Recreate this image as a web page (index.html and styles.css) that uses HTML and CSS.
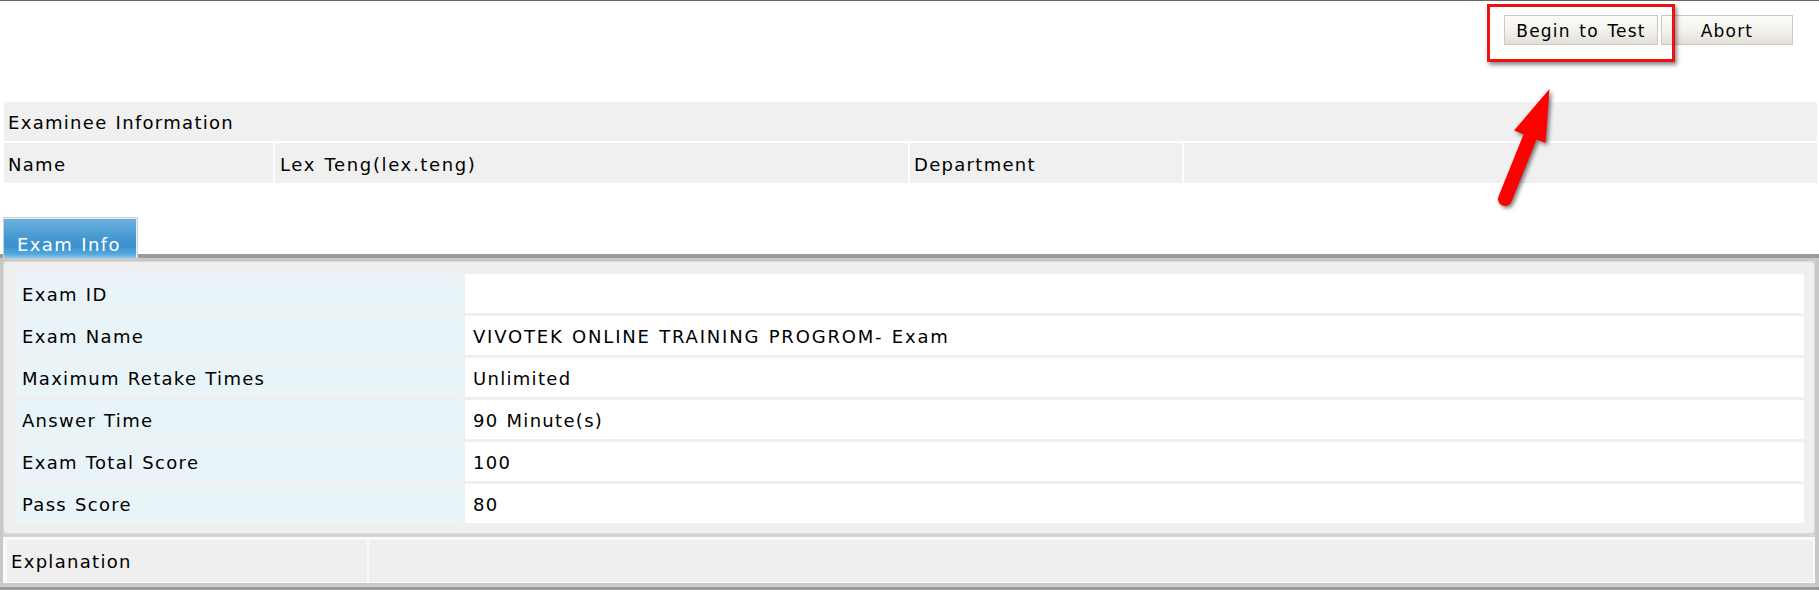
FILE: index.html
```html
<!DOCTYPE html>
<html lang="en">
<head>
<meta charset="utf-8">
<title>Exam Info</title>
<link rel="stylesheet" href="styles.css">
</head>
<body>
<div class="page">
  <div class="topline"></div>
  <div class="toolbar">
    <button class="btn btn-begin">Begin to Test</button>
    <button class="btn btn-abort">Abort</button>
  </div>

  <div class="examinee">
    <div class="ecell title">Examinee Information</div>
    <div class="ecell">Name</div>
    <div class="ecell wide-s">Lex Teng(lex.teng)</div>
    <div class="ecell">Department</div>
    <div class="ecell"></div>
  </div>

  <div class="tabs">
    <div class="tab"><div class="tab-inner">Exam Info</div></div>
  </div>

  <div class="tabbody">
    <div class="panel">
      <div class="info">
        <div class="lbl">Exam ID</div><div class="val"></div>
        <div class="lbl">Exam Name</div><div class="val wide">VIVOTEK ONLINE TRAINING PROGROM- Exam</div>
        <div class="lbl">Maximum Retake Times</div><div class="val">Unlimited</div>
        <div class="lbl">Answer Time</div><div class="val">90 Minute(s)</div>
        <div class="lbl">Exam Total Score</div><div class="val">100</div>
        <div class="lbl">Pass Score</div><div class="val">80</div>
      </div>
    </div>
    <div class="explain">
      <div class="xcell">Explanation</div>
      <div class="xcell"></div>
    </div>
  </div>

  <div class="highlight"></div>
  <svg class="arrow" viewBox="1490 84 70 130" width="70" height="130" aria-hidden="true">
    <line x1="1530" y1="137" x2="1505" y2="199" stroke="#ff0000" stroke-width="14" stroke-linecap="round"/>
    <polygon points="1549.5,89 1514,130.5 1545.5,143" fill="#ff0000"/>
  </svg>
</div>
</body>
</html>
```

FILE: styles.css
```css
html, body {
  margin: 0;
  padding: 0;
  background: #ffffff;
}
body {
  font-family: "DejaVu Sans", Verdana, sans-serif;
  font-size: 18px;
  color: #000;
  overflow: hidden;
}
.page {
  position: relative;
  width: 1819px;
  height: 590px;
  overflow: hidden;
}
.topline {
  height: 1px;
  background: #666666;
}
.toolbar {
  display: flex;
  justify-content: flex-end;
  gap: 3px;
  padding: 14px 26px 57px 0;
}
.btn {
  box-sizing: border-box;
  height: 30px;
  margin: 0;
  padding: 2px 0 0;
  border: 1px solid #cdcac0;
  background: linear-gradient(#fbfbf9 0%, #f3f2ed 50%, #e2dfd6 100%);
  font-family: "DejaVu Sans", Verdana, sans-serif;
  font-size: 17px;
  letter-spacing: 1.2px;
  word-spacing: 2px;
  color: #000;
  text-align: center;
  line-height: 24px;
}
.btn-begin { width: 154px; }
.btn-abort { width: 132px; }

.examinee {
  display: grid;
  grid-template-columns: 269px 633px 272px 1fr;
  grid-template-rows: 39px 40px;
  gap: 2px;
  padding: 0 2px 0 4px;
}
.ecell {
  background: #f0f0f0;
  padding: 2px 0 0 4px;
  display: flex;
  align-items: center;
  letter-spacing: 1.3px;
  word-spacing: 1px;
  white-space: nowrap;
}
.ecell.title {
  grid-column: 1 / -1;
}
.ecell.wide-s {
  padding-left: 5px;
  letter-spacing: 1.65px;
}

.tabs {
  margin-top: 34px;
  display: flex;
  align-items: flex-end;
  border-bottom: 4px solid #9a9a9a;
}
.tab {
  margin: 0 0 -4px 3px;
  border: 1px solid #c8d2d9;
  border-bottom: 0;
  padding: 1px 1px 0 0;
  background: #e8eef2;
}
.tab-inner {
  box-sizing: border-box;
  width: 132px;
  height: 39px;
  padding: 15px 0 3px 13px;
  line-height: 21px;
  color: #ffffff;
  letter-spacing: 1.4px;
  word-spacing: 1px;
  white-space: nowrap;
  background: linear-gradient(#6db1de 0%, #4c9cd3 40%, #3a91cd 70%, #54a8dc 90%, #8ccbef 100%);
}

.tabbody {
  border-top: 3px solid #c8c8c8;
  border-left: 3px solid #c8c8c8;
  border-right: 4px solid #c8c8c8;
  border-bottom: 4px solid #cbcbcb;
  box-shadow: 0 3px 0 #9a9a9a;
  background: #d3d3d3;
}
.panel {
  background: #efefef;
  border: 1px solid #d8d8d8;
  border-radius: 4px;
  padding: 12px 10px 10px 11px;
  margin-bottom: 3px;
}
.info {
  display: grid;
  grid-template-columns: 448px 1fr;
  grid-auto-rows: 39px;
  column-gap: 2px;
  row-gap: 3px;
}
.lbl, .val {
  display: flex;
  align-items: center;
  padding-top: 2px;
  letter-spacing: 1.3px;
  word-spacing: 1px;
  white-space: nowrap;
}
.lbl {
  background: #e9f4f9;
  padding-left: 7px;
}
.val {
  background: #ffffff;
  padding-left: 8px;
}
.val.wide {
  letter-spacing: 1.8px;
}

.explain {
  display: grid;
  grid-template-columns: 360px 1fr;
  grid-template-rows: 42px;
  column-gap: 2px;
  padding: 3px 2px 1px 4px;
  background: #fbfbfb;
}
.xcell {
  background: #efefef;
  display: flex;
  align-items: center;
  padding-left: 4px;
  letter-spacing: 1.3px;
  word-spacing: 1px;
}

.highlight {
  position: absolute;
  left: 1487px;
  top: 4px;
  width: 188px;
  height: 58px;
  box-sizing: border-box;
  border: 3px solid #f01010;
  box-shadow: 2px 3px 4px rgba(0, 0, 0, 0.45);
}
.arrow {
  position: absolute;
  left: 1490px;
  top: 84px;
  overflow: visible;
  filter: drop-shadow(2px 2px 2px rgba(0, 0, 0, 0.55));
}
```
